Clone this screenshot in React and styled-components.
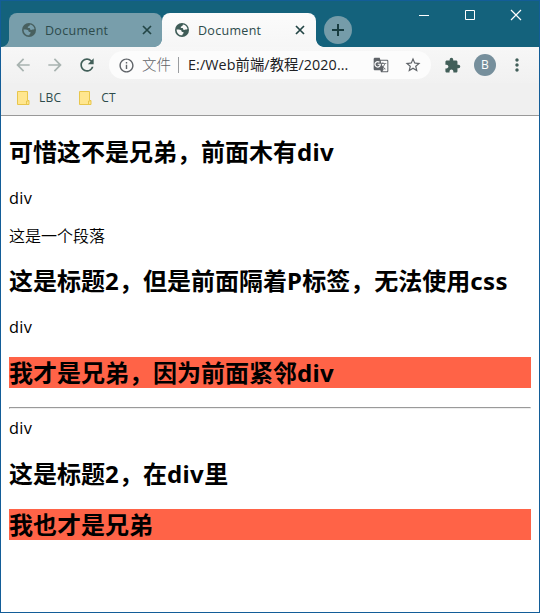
import React from "react";
import styled, { createGlobalStyle } from "styled-components";
import {
  MdArrowBack,
  MdArrowForward,
  MdRefresh,
  MdInfoOutline,
  MdGTranslate,
  MdStarBorder,
  MdExtension,
  MdMoreVert,
} from "react-icons/md";

const ink = "#425f59";

const GlobalStyle = createGlobalStyle`
  * { box-sizing: border-box; }
  html, body { margin: 0; padding: 0; }
  body {
    font-family: "Open Sans", "Noto Sans CJK SC", sans-serif;
    overflow: hidden;
  }
  svg { display: block; flex: none; }
`;

const Window = styled.div`
  width: 540px;
  height: 613px;
  border: 1px solid #135d98;
  display: flex;
  flex-direction: column;
  background: #fff;
`;

const TitleBar = styled.header`
  height: 46px;
  flex: none;
  display: flex;
  align-items: flex-end;
  padding-left: 8px;
  background: #14627c;
`;

const Tab = styled.div`
  position: relative;
  z-index: ${(p) => (p.$active ? 1 : 0)};
  width: ${(p) => (p.$active ? 154 : 153)}px;
  height: 34px;
  display: flex;
  align-items: center;
  padding: 0 ${(p) => (p.$active ? 10 : 9)}px 0 12px;
  border-radius: ${(p) => (p.$active ? "8px 8px 0 0" : "8px 8px 8px 0")};
  background: ${(p) => (p.$active ? "linear-gradient(#fbfbfb, #f6f6f6)" : "#789eab")};
  color: #2d4b4b;

  &::before,
  &::after {
    content: "";
    position: absolute;
    bottom: 0;
    width: 8px;
    height: 8px;
  }
  &::before {
    left: -8px;
    display: ${(p) => (p.$active ? "none" : "block")};
    background: radial-gradient(circle at 0 0, transparent 7.5px, #789eab 8.2px);
  }
  &::after {
    right: -8px;
    display: ${(p) => (p.$active ? "block" : "none")};
    background: radial-gradient(circle at 100% 0, transparent 7.5px, #f6f6f6 8.2px);
  }
`;

const TabSeam = styled.div`
  width: 8px;
  height: 8px;
  margin-left: -8px;
  background: radial-gradient(circle at 0 0, transparent 7.5px, #f6f6f6 8.2px);
  position: relative;
`;

const TabTitle = styled.span`
  flex: 1;
  margin-left: 8px;
  font-size: 12.5px;
  letter-spacing: 0.3px;
  line-height: 18px;
  padding-top: 1px;
`;

const NewTab = styled.div`
  width: 28px;
  height: 28px;
  margin: 0 0 3px 8px;
  border-radius: 50%;
  display: flex;
  align-items: center;
  justify-content: center;
  background: #759ca9;
`;

const WindowControls = styled.div`
  align-self: flex-start;
  display: flex;
  gap: 34px;
  margin: 8px 17px 0 auto;
`;

const Toolbar = styled.div`
  height: 36px;
  flex: none;
  display: flex;
  align-items: center;
  padding: 0 12px;
  background: linear-gradient(#f7f7f7, #f1f1f1);
  color: ${ink};
`;

const NavButtons = styled.nav`
  display: flex;
  gap: 12px;
  width: 96px;
  flex: none;
`;

const DimIcon = styled.span`
  color: #a8b3b0;
`;

const AddressBar = styled.div`
  width: 322px;
  height: 28px;
  border-radius: 14px;
  display: flex;
  align-items: center;
  padding: 0 9px;
  background: #fcfcfc;
  color: #5f6368;
`;

const Scheme = styled.span`
  margin-left: 7px;
  padding-right: 7px;
  border-right: 1px solid #9a9da0;
  font-size: 14.5px;
  font-weight: 300;
  line-height: 16px;
`;

const Url = styled.span`
  flex: 1;
  margin-left: 9px;
  font-size: 14.3px;
  letter-spacing: 0.1px;
  line-height: 20px;
  white-space: nowrap;
  color: #202124;
`;

const AddressActions = styled.div`
  display: flex;
  align-items: center;
  gap: 15px;
`;

const ToolbarActions = styled.div`
  display: flex;
  align-items: center;
  margin-left: 13px;
`;

const Avatar = styled.span`
  width: 22px;
  height: 22px;
  margin: 0 11px 0 13px;
  border-radius: 50%;
  background: #768f9c;
  color: #fff;
  font-size: 12px;
  line-height: 22px;
  text-align: center;
`;

const BookmarksBar = styled.div`
  height: 33px;
  flex: none;
  display: flex;
  padding: 5px 0 0 16px;
  gap: 18px;
  background: #f0f0f0;
  border-bottom: 1px solid #999;
`;

const Bookmark = styled.div`
  height: 20px;
  display: flex;
  align-items: center;
  gap: 9px;
  font-size: 12px;
  letter-spacing: 0.2px;
  line-height: 20px;
  color: #2d4b4b;
`;

const Page = styled.main`
  padding: 0 8px;
  color: #000;
  font-size: 16px;
  line-height: 21px;
`;

const Heading = styled.h2`
  margin: 19.92px 0;
  height: 31px;
  font-family: "Noto Sans", "Noto Sans CJK SC", sans-serif;
  font-size: 24px;
  font-weight: 700;
  line-height: 31px;
  white-space: nowrap;
  background: ${(p) => (p.$sibling ? "tomato" : "transparent")};
`;

const Latin = styled.span`
  letter-spacing: 0.35px;
`;

const Block = styled.div``;

const Line = styled.div`
  height: 21px;
  line-height: 23px;
  font-size: 16.3px;
  letter-spacing: 0.3px;
`;

const Paragraph = styled.p`
  margin: 16px 0;
  height: 21px;
  line-height: 23px;
  font-family: "Noto Sans CJK SC", sans-serif;
  font-weight: 350;
`;

const Rule = styled.hr`
  margin: 8px 0;
  height: 2px;
  border: 1px solid;
  border-color: #9a9a9a #eee #eee #9a9a9a;
`;

const GlobeGlyph = ({ color, land }) => (
  <svg width="16" height="16" viewBox="0 0 16 16">
    <circle cx="8" cy="8" r="7" fill={color} />
    <path
      d="M2.600 7.500c1.800-.2 3.600-.1 4.500.7.700.7.200 1.500 1.200 1.700 1 .1 1.500.4 1.300 1.200-.2.700-1.200.8-1.200 2.200-2.900.3-5.800-2-5.800-5.800z"
      fill={land}
    />
    <path
      d="M9 2.500c2.500.4 4.200 2.300 4.500 4.600-.9.700-1.400.1-2.100.4-.7.400-1.200.8-1.900.3-.7-.5-.2-1.400-1-1.700-.8-.2-1.700.1-1.800-.8 0-.8 1-1 1.500-1.200.6-.3.300-1 .8-1.600z"
      fill={land}
    />
  </svg>
);

const CloseGlyph = () => (
  <svg width="12" height="12" viewBox="0 0 12 12">
    <path d="M2 2L10 10M10 2L2 10" stroke="#234545" strokeWidth="1.7" />
  </svg>
);

const FolderGlyph = () => (
  <svg width="13" height="16" viewBox="0 0 13 16">
    <path d="M.5 1.500h10v9h1.500v4H.5z" fill="#ffe68f" stroke="#e8c64c" />
    <path d="M9.500 14.500v-3.500h2" fill="none" stroke="#e8c64c" />
  </svg>
);

const BrowserTab = ({ active }) => (
  <Tab $active={active}>
    <GlobeGlyph color={active ? "#3f5c57" : "#48605f"} land={active ? "#f8f8f8" : "#789eab"} />
    <TabTitle>Document</TabTitle>
    <CloseGlyph />
  </Tab>
);

export default function App() {
  return (
    <>
      <GlobalStyle />
      <Window>
        <TitleBar>
          <BrowserTab />
          <TabSeam />
          <BrowserTab active />
          <NewTab>
            <svg width="12" height="12" viewBox="0 0 12 12">
              <path d="M6 0v12M0 6h12" stroke="#183c40" strokeWidth="2" />
            </svg>
          </NewTab>
          <WindowControls>
            <svg width="12" height="12" viewBox="0 0 12 12">
              <path d="M1 6.500h10" stroke="#fff" />
            </svg>
            <svg width="12" height="12" viewBox="0 0 12 12">
              <path d="M1.500 1.500h9v9h-9z" fill="none" stroke="#fff" />
            </svg>
            <svg width="12" height="12" viewBox="0 0 12 12">
              <path d="M1 1l10 10M11 1L1 11" stroke="#fff" strokeWidth="1.200" />
            </svg>
          </WindowControls>
        </TitleBar>
        <Toolbar>
          <NavButtons>
            <DimIcon><MdArrowBack size={20} /></DimIcon>
            <DimIcon><MdArrowForward size={20} /></DimIcon>
            <MdRefresh size={20} />
          </NavButtons>
          <AddressBar>
            <MdInfoOutline size={17} />
            <Scheme>文件</Scheme>
            <Url>E:/Web前端/教程/2020...</Url>
            <AddressActions>
              <MdGTranslate size={16} />
              <MdStarBorder size={18} />
            </AddressActions>
          </AddressBar>
          <ToolbarActions>
            <MdExtension size={17} />
            <Avatar>B</Avatar>
            <MdMoreVert size={20} />
          </ToolbarActions>
        </Toolbar>
        <BookmarksBar>
          <Bookmark><FolderGlyph />LBC</Bookmark>
          <Bookmark><FolderGlyph />CT</Bookmark>
        </BookmarksBar>
        <Page>
          <Heading>可惜这不是兄弟，前面木有<Latin>div</Latin></Heading>
          <Line>div</Line>
          <Paragraph>这是一个段落</Paragraph>
          <Heading>这是标题<Latin>2</Latin>，但是前面隔着<Latin>P</Latin>标签，无法使用<Latin>css</Latin></Heading>
          <Line>div</Line>
          <Heading $sibling>我才是兄弟，因为前面紧邻<Latin>div</Latin></Heading>
          <Rule />
          <Block>
            <Line>div</Line>
            <Heading>这是标题<Latin>2</Latin>，在<Latin>div</Latin>里</Heading>
          </Block>
          <Heading $sibling>我也才是兄弟</Heading>
        </Page>
      </Window>
    </>
  );
}
